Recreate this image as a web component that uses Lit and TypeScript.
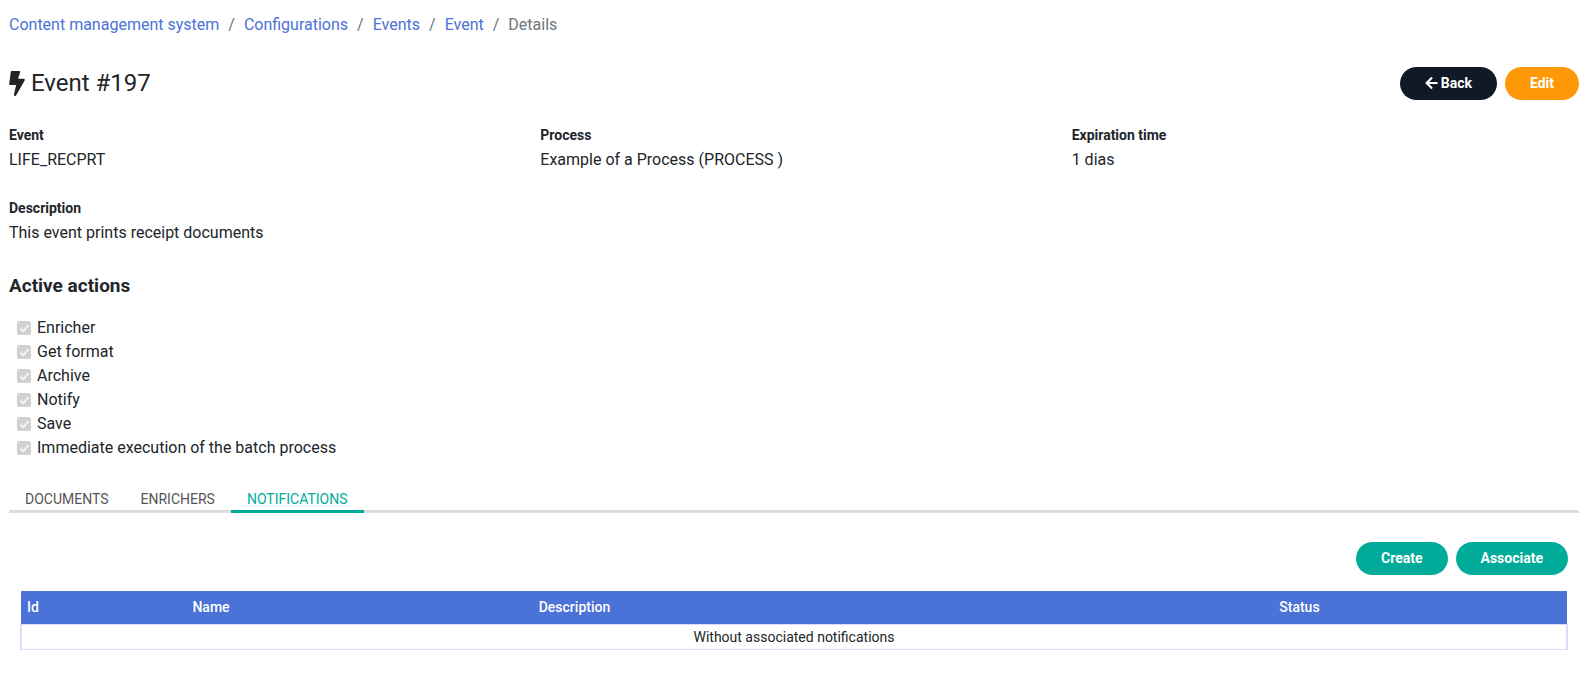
import { LitElement, html, css } from "lit";
import { customElement, property, state } from "lit/decorators.js";

interface Crumb { label: string; href?: string; }

const CRUMBS: Crumb[] = [
  { label: "Content management system", href: "#cms" },
  { label: "Configurations", href: "#configurations" },
  { label: "Events", href: "#events" },
  { label: "Event", href: "#event" },
  { label: "Details" },
];

const ACTIONS = [
  "Enricher",
  "Get format",
  "Archive",
  "Notify",
  "Save",
  "Immediate execution of the batch process",
];

const TABS = ["Documents", "Enrichers", "Notifications"];

@customElement("app-breadcrumb")
class AppBreadcrumb extends LitElement {
  static styles = css`
    :host { display: block; }
    .list { display: flex; flex-wrap: wrap; margin: 0; padding: 0; list-style: none; }
    .item { color: #6c757d; }
    .item + .item::before { content: "/"; padding: 0 9px; }
    .link { color: #4b72d6; text-decoration: none; }
    .link:hover { text-decoration: underline; }
  `;
  render() {
    return html`<nav aria-label="Breadcrumb"><ol class="list">
      ${CRUMBS.map((c) => html`<li class="item">${c.href
        ? html`<a class="link" href=${c.href}>${c.label}</a>`
        : html`<span aria-current="page">${c.label}</span>`}</li>`)}
    </ol></nav>`;
  }
}

@customElement("app-field")
class AppField extends LitElement {
  @property() label = "";
  @property() value = "";
  static styles = css`
    :host { display: block; }
    .list { margin: 0; }
    .label { margin-bottom: 1px; font-size: 14px; font-weight: 700; line-height: 24px; }
    .value { margin: 0; line-height: 24px; }
  `;
  render() {
    return html`<dl class="list"><dt class="label">${this.label}</dt><dd class="value">${this.value}</dd></dl>`;
  }
}

@customElement("app-root")
class AppRoot extends LitElement {
  @state() private tab = "Notifications";

  static styles = css`
    :host {
      display: block;
      box-sizing: border-box;
      padding: 13px 8px 24px 9px;
      font-family: Roboto, sans-serif;
      font-size: 16px;
      line-height: 24px;
      color: #212529;
      background: #fff;
    }
    .header { display: flex; align-items: center; justify-content: space-between; margin-top: 29px; }
    .title { display: flex; align-items: center; gap: 6px; margin: 0; font-size: 24px; font-weight: 400; line-height: 34px; }
    .bolt { width: 16px; height: 25px; fill: currentColor; }
    .buttons { display: flex; gap: 8px; }
    .button {
      display: inline-flex; align-items: center; gap: 3px; height: 33px; padding: 0 25px;
      border: 0; border-radius: 17px; font: 700 14px/21px Roboto, sans-serif; color: #fff; cursor: pointer;
    }
    .dark { background: #111827; }
    .orange { background: #ff9806; }
    .green { background: #00ab9a; }
    .arrow { width: 13px; height: 14px; fill: currentColor; }
    .fields { display: grid; grid-template-columns: repeat(3, 1fr); gap: 24px; margin-top: 23px; }
    .section { margin: 29px 0 0; font-size: 19px; font-weight: 700; line-height: 24px; }
    .actions { margin: 18px 0 0; padding: 0; list-style: none; }
    .action { display: flex; align-items: center; gap: 6px; padding-left: 8px; }
    .check {
      appearance: none; box-sizing: border-box; width: 14px; height: 14px; margin: 0; border-radius: 2px;
      background: #d1d1d1; display: grid; place-items: center;
    }
    .check:checked::after {
      content: ""; width: 3px; height: 7px; margin-bottom: 2px;
      border: solid #f4f4f4; border-width: 0 2px 2px 0; transform: rotate(42deg);
    }
    .tabs { display: flex; margin-top: 24px; box-shadow: inset 0 -3px #ddd; }
    .tab {
      padding: 6px 16px 1px; border: 0; border-bottom: 3px solid transparent; background: none;
      font: 400 14px/19px Roboto, sans-serif; text-transform: uppercase; color: #555; cursor: pointer;
    }
    .selected { color: #00ab9a; border-bottom-color: #00ab9a; }
    .panel { padding: 29px 11px 0; }
    .panel-buttons { display: flex; justify-content: flex-end; gap: 8px; }
    .table { width: 100%; margin-top: 16px; border-collapse: collapse; table-layout: fixed; font-size: 14px; }
    .head { padding: 6px; background: #4b72d6; color: #fff; font-weight: 500; line-height: 21px; text-align: left; }
    .empty { padding: 2px 6px; border: solid #d8defa; border-width: 1px 2px; line-height: 20px; text-align: center; }
    .col-id { width: 10.7%; }
    .col-name { width: 22.4%; }
    .col-description { width: 47.9%; }
  `;

  render() {
    return html`
      <app-breadcrumb></app-breadcrumb>
      <main>
        <header class="header">
          <h1 class="title">
            <svg class="bolt" viewBox="0 0 320 512" aria-hidden="true"><path d="M296 160H180.6l42.6-129.8C227.2 15 215.7 0 200 0H56C44 0 33.8 8.9 32.2 20.8l-32 240C-1.7 275.2 9.5 288 24 288h118.7L96.6 482.5c-3.6 15.2 8 29.5 23.3 29.5 8.4 0 16.4-4.4 20.8-12l176-304c9.3-15.9-2.2-36-20.7-36z"/></svg>
            Event #197
          </h1>
          <div class="buttons">
            <button class="button dark" type="button">
              <svg class="arrow" viewBox="0 0 448 512" aria-hidden="true"><path d="M257.5 445.1l-22.2 22.2c-9.4 9.4-24.6 9.4-33.9 0L7 273c-9.4-9.4-9.4-24.6 0-33.9L201.4 44.7c9.4-9.4 24.6-9.4 33.9 0l22.2 22.2c9.5 9.5 9.3 25-.4 34.3L136.6 216H424c13.3 0 24 10.7 24 24v32c0 13.3-10.7 24-24 24H136.6l120.5 114.8c9.8 9.3 10 24.8.4 34.3z"/></svg>Back</button>
            <button class="button orange" type="button">Edit</button>
          </div>
        </header>
        <section class="fields">
          <app-field label="Event" value="LIFE_RECPRT"></app-field>
          <app-field label="Process" value="Example of a Process (PROCESS )"></app-field>
          <app-field label="Expiration time" value="1 dias"></app-field>
          <app-field label="Description" value="This event prints receipt documents"></app-field>
        </section>
        <h2 class="section">Active actions</h2>
        <ul class="actions">
          ${ACTIONS.map((a, i) => html`<li class="action">
            <input class="check" type="checkbox" id="action-${i}" checked disabled /><label for="action-${i}">${a}</label>
          </li>`)}
        </ul>
        <div class="tabs" role="tablist">
          ${TABS.map((t) => html`<button type="button" role="tab" class="tab ${t === this.tab ? "selected" : ""}"
            aria-selected=${t === this.tab ? "true" : "false"} @click=${() => (this.tab = t)}>${t}</button>`)}
        </div>
        <section class="panel" role="tabpanel" aria-label=${this.tab}>
          <div class="panel-buttons">
            <button class="button green" type="button">Create</button>
            <button class="button green" type="button">Associate</button>
          </div>
          <table class="table">
            <colgroup><col class="col-id" /><col class="col-name" /><col class="col-description" /><col /></colgroup>
            <thead><tr>
              <th class="head" scope="col">Id</th>
              <th class="head" scope="col">Name</th>
              <th class="head" scope="col">Description</th>
              <th class="head" scope="col">Status</th>
            </tr></thead>
            <tbody><tr><td class="empty" colspan="4">Without associated ${this.tab.toLowerCase()}</td></tr></tbody>
          </table>
        </section>
      </main>
    `;
  }
}
